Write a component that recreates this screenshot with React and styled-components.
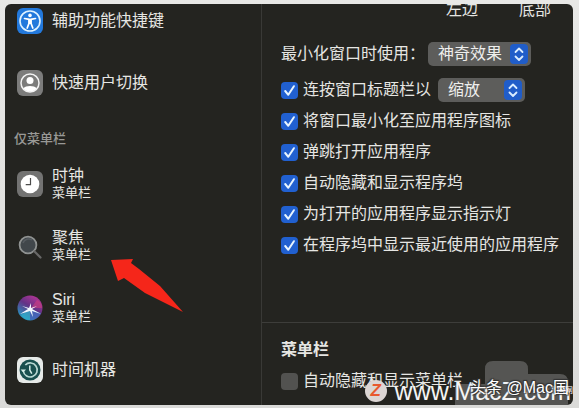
import React, { useState } from 'react'
import styled, { createGlobalStyle } from 'styled-components'

const GlobalStyle = createGlobalStyle`
  * {
    box-sizing: border-box;
  }

  body {
    margin: 0;
    background-color: #dededb;
    color: #e6e6e3;
    font-family: 'Liberation Sans', 'Noto Sans CJK SC', sans-serif;
    font-size: 16px;
    line-height: 18px;
  }
`;

const Page = styled.div`
  display: flex;
  min-height: 100vh;
  padding: 4px 6px 3px 5px;
  background: linear-gradient(#e8e8e6, #dadad8);
`;

const Panel = styled.div`
  position: relative;
  flex: 1;
  display: grid;
  grid-template-columns: 257px minmax(0, 1fr);
  overflow: hidden;
  border-radius: 6px;
  background-color: #242420;
`;

const Sidebar = styled.nav`
  border-right: 1px solid #393936;
`;

const Section = styled.ul`
  display: flex;
  flex-direction: column;
  gap: 28px;
  margin: 0;
  padding: 0 12px;
  list-style: none;
`;

const SectionTitle = styled.h2`
  margin: 29px 0 18px;
  padding-left: 9px;
  color: #999996;
  font-size: 13px;
  font-weight: 500;
  line-height: 20px;
`;

const Item = styled.li`
  display: flex;
  align-items: center;
  gap: 9px;
  height: 34px;

  svg {
    flex: none;
  }
`;

const ItemText = styled.div`
  display: flex;
  flex-direction: column;
`;

const ItemNote = styled.span`
  font-size: 13px;
  line-height: 16px;
`;

const Main = styled.main`
  display: flex;
  flex-direction: column;
`;

const PositionRow = styled.div`
  display: flex;
  justify-content: flex-end;
  align-items: flex-end;
  gap: 41px;
  height: 15px;
  padding-right: 22px;
`;

const Form = styled.div`
  display: flex;
  flex-direction: column;
  gap: 7px;
  padding: 23px 12px 0 19px;
`;

const Row = styled.div`
  display: flex;
  align-items: center;
  gap: ${(props) => props.$gap || 0}px;
  min-height: 24px;
  margin-bottom: ${(props) => props.$space || 0}px;
  white-space: nowrap;
`;

const SelectWrapper = styled.div`
  position: relative;
  width: ${(props) => props.$width}px;
  height: 24px;

  svg {
    position: absolute;
    top: 2px;
    right: 3px;
    pointer-events: none;
  }
`;

const Select = styled.select`
  appearance: none;
  width: 100%;
  height: 100%;
  padding: 0 24px 0 10px;
  border: 0;
  border-radius: 5px;
  background-color: #5d5d5b;
  color: #eeeeec;
  font: inherit;
`;

const CheckLabel = styled.label`
  display: flex;
  align-items: center;
  gap: 5px;
`;

const CheckBox = styled.span`
  display: grid;
  width: 17px;
  height: 17px;

  input,
  svg {
    grid-area: 1 / 1;
  }

  svg {
    pointer-events: none;
  }
`;

const CheckInput = styled.input`
  appearance: none;
  width: 17px;
  height: 17px;
  margin: 0;
  border-radius: 4px;
  background-color: #525250;

  &:checked {
    background-color: #2160d0;
  }
`;

const MenuBar = styled.section`
  margin-top: 65px;
  padding: 18px 12px 0 19px;
  border-top: 1px solid #3d3d3a;
`;

const MenuBarTitle = styled.h2`
  margin: 0 0 10px;
  font-size: 16px;
  font-weight: 700;
  line-height: 18px;
`;

/* 指向「聚焦」的红色箭头 */
const Arrow = styled.svg`
  position: absolute;
  top: 250px;
  left: 100px;
`;

const Smudge = styled.svg`
  position: absolute;
  right: 0;
  bottom: 0;
`;

const SiteMark = styled.div`
  position: absolute;
  right: 2px;
  bottom: 0;
  display: flex;
  align-items: center;
  gap: 8px;
  height: 28px;
  color: #f4f4f4;
  font-size: 25px;
  line-height: 28px;
  white-space: nowrap;
`;

const SiteLogo = styled.span`
  width: 22px;
  height: 22px;
  border-radius: 50%;
  background-color: #dcd6d4;
  color: #e8592f;
  font-size: 17px;
  font-style: italic;
  font-weight: 700;
  line-height: 22px;
  text-align: center;
`;

const AuthorMark = styled.div`
  position: absolute;
  right: 4px;
  bottom: 8px;
  color: #ffffff;
  font-size: 16px;
  text-shadow: 1px 1px 1px #333333, -1px -1px 1px #333333, 1px -1px 1px #333333;
  white-space: nowrap;
`;

const CornerMark = styled.div`
  position: absolute;
  right: 0;
  bottom: 10px;
  color: #ffffff;
  font-size: 8px;
  line-height: 9px;
`;

const AccessibilityIcon = () => (
  <svg width="26" height="26" viewBox="0 0 26 26" fill="none">
    <rect width="26" height="26" rx="6" fill="#2379dc" />
    <circle cx="13" cy="13" r="10" stroke="#dff2ff" strokeWidth="1.6" />
    <circle cx="13" cy="7.4" r="1.8" fill="#fff" />
    <path d="M7.5 10.5 12 11.3v4L10.2 20M18.5 10.5 14 11.3v4l1.8 4.7" stroke="#fff" strokeWidth="1.7" strokeLinecap="round" />
    <path d="M11.4 11h3.2v5h-3.2z" fill="#fff" />
  </svg>
)

const UserIcon = () => (
  <svg width="26" height="26" viewBox="0 0 26 26" fill="none">
    <rect width="26" height="26" rx="6" fill="#7c7c7b" />
    <circle cx="13" cy="13" r="9" stroke="#f2f2f2" strokeWidth="1.5" />
    <circle cx="13" cy="10.5" r="3.5" fill="#fff" />
    <path d="M6.5 18.3c2-3 11-3 13 0-3 4.4-10 4.4-13 0z" fill="#fff" />
  </svg>
)

const ClockIcon = () => (
  <svg width="26" height="26" viewBox="0 0 26 26" fill="none">
    <rect width="26" height="26" rx="6" fill="#737372" />
    <circle cx="13" cy="13" r="9.3" fill="#fff" />
    <path d="M13.5 7v6.7H8.7" stroke="#4c4c4b" strokeWidth="1.2" />
  </svg>
)

const SpotlightIcon = () => (
  <svg width="26" height="26" viewBox="0 0 26 26" fill="none">
    <circle cx="11" cy="12" r="8.4" fill="#41474b" stroke="#8f9291" strokeWidth="1.8" />
    <path d="M6 10a6 6 0 0 1 9-3" stroke="#565c60" strokeWidth="1.5" />
    <path d="m17.5 18.5 6 6" stroke="#686867" strokeWidth="2.2" strokeLinecap="round" />
  </svg>
)

const SiriIcon = () => (
  <svg width="26" height="26" viewBox="0 0 26 26" fill="none">
    <defs>
      <linearGradient id="siri" x1="20" y1="2" x2="6" y2="24" gradientUnits="userSpaceOnUse">
        <stop stopColor="#b03595" />
        <stop offset=".45" stopColor="#633286" />
        <stop offset="1" stopColor="#239bc4" />
      </linearGradient>
    </defs>
    <circle cx="13" cy="13" r="12.5" fill="url(#siri)" />
    <path d="M14 13 20 5c4 2 5 5 5 8z" fill="#cf3f80" opacity=".6" />
    <path d="m13 14-9 6c2 3 5 5 9 5z" fill="#31b9cf" opacity=".6" />
    <path d="m13 14 11 4c-2 4-6 7-11 7z" fill="#4468bd" opacity=".8" />
    <path d="m3 19 8-5-6-3 7 2 2-5v5l6-2-5 3 9 5-9-3 1 6-3-6z" fill="#f2f7ff" />
  </svg>
)

const TimeMachineIcon = () => (
  <svg width="26" height="26" viewBox="0 0 26 26" fill="none">
    <rect width="26" height="26" rx="6" fill="#e6eae8" />
    <circle cx="13" cy="13" r="10.5" fill="#19504f" />
    <path d="M6.3 14a7 7 0 1 0 2-6" stroke="#b8d8d3" strokeWidth="1.7" />
    <path d="m3.6 12.4 2.7 3.2 2.7-3.2z" fill="#d8efe9" />
    <path d="M12.8 8.5V13l2 3.7" stroke="#d8efe9" strokeWidth="1.5" />
  </svg>
)

const Stepper = () => (
  <svg width="18" height="20" viewBox="0 0 18 20" fill="none">
    <rect width="18" height="20" rx="4" fill="#205dc9" />
    <path d="m5.5 8 3.5-3.5L12.5 8M5.5 12.5 9 16l3.5-3.5" stroke="#d9ecff" strokeWidth="1.8" strokeLinecap="round" strokeLinejoin="round" />
  </svg>
)

const barItems = [
  { title: '时钟', note: '菜单栏', icon: <ClockIcon /> },
  { title: '聚焦', note: '菜单栏', icon: <SpotlightIcon /> },
  { title: 'Siri', note: '菜单栏', icon: <SiriIcon /> },
  { title: '时间机器', icon: <TimeMachineIcon /> },
]

const dockOptions = [
  '将窗口最小化至应用程序图标',
  '弹跳打开应用程序',
  '自动隐藏和显示程序坞',
  '为打开的应用程序显示指示灯',
  '在程序坞中显示最近使用的应用程序',
]

const SidebarItem = (props) => (
  <Item>
    {props.icon}
    <ItemText>
      <span>{props.title}</span>
      {props.note && <ItemNote>{props.note}</ItemNote>}
    </ItemText>
  </Item>
)

const Check = (props) => {
  const [checked, setChecked] = useState(!props.off)

  return (
    <CheckLabel>
      <CheckBox>
        <CheckInput type="checkbox" checked={checked} onChange={() => setChecked(!checked)} />
        {checked && (
          <svg width="17" height="17" viewBox="0 0 17 17" fill="none">
            <path d="m4.2 9 3.1 3.8 5.6-8.6" stroke="#e8f5ff" strokeWidth="2" strokeLinecap="round" strokeLinejoin="round" />
          </svg>
        )}
      </CheckBox>
      {props.children}
    </CheckLabel>
  )
}

const App = () => {
  return (
    <>
      <GlobalStyle />
      <Page>
        <Panel>
          <Sidebar>
            <Section>
              <SidebarItem title="辅助功能快捷键" icon={<AccessibilityIcon />} />
              <SidebarItem title="快速用户切换" icon={<UserIcon />} />
            </Section>
            <SectionTitle>仅菜单栏</SectionTitle>
            <Section>
              {barItems.map((item) => (
                <SidebarItem key={item.title} {...item} />
              ))}
            </Section>
          </Sidebar>
          <Main>
            <PositionRow>
              <span>左边</span>
              <span>底部</span>
            </PositionRow>
            <Form>
              <Row $gap={3} $space={5}>
                <label htmlFor="effect">最小化窗口时使用：</label>
                <SelectWrapper $width={103}>
                  <Select id="effect">
                    <option>神奇效果</option>
                    <option>缩放效果</option>
                  </Select>
                  <Stepper />
                </SelectWrapper>
              </Row>
              <Row $gap={7}>
                <Check>连按窗口标题栏以</Check>
                <SelectWrapper $width={87}>
                  <Select aria-label="连按窗口标题栏以">
                    <option>缩放</option>
                    <option>最小化</option>
                  </Select>
                  <Stepper />
                </SelectWrapper>
              </Row>
              {dockOptions.map((text) => (
                <Row key={text}>
                  <Check>{text}</Check>
                </Row>
              ))}
            </Form>
            <MenuBar>
              <MenuBarTitle>菜单栏</MenuBarTitle>
              <Row>
                <Check off>自动隐藏和显示菜单栏</Check>
              </Row>
            </MenuBar>
          </Main>
          <Arrow width="80" height="62" viewBox="0 0 80 62">
            <path d="M6 6 28 5 26 9 34 15 55 32 78 58 40 39 19 24 13 27z" fill="#f5261a" />
          </Arrow>
          <Smudge width="120" height="45" viewBox="0 0 120 45">
            <path d="M2 27q0-3 3-3h27V9q0-8 8-8h27q8 0 8 8v5h32q8 0 8 8v23H2z" fill="#555553" />
          </Smudge>
          <SiteMark>
            <SiteLogo>Z</SiteLogo>
            <span>www.MacZ.com</span>
          </SiteMark>
          <AuthorMark>头条 @Mac国</AuthorMark>
          <CornerMark>国网</CornerMark>
        </Panel>
      </Page>
    </>
  )
}

export default App
